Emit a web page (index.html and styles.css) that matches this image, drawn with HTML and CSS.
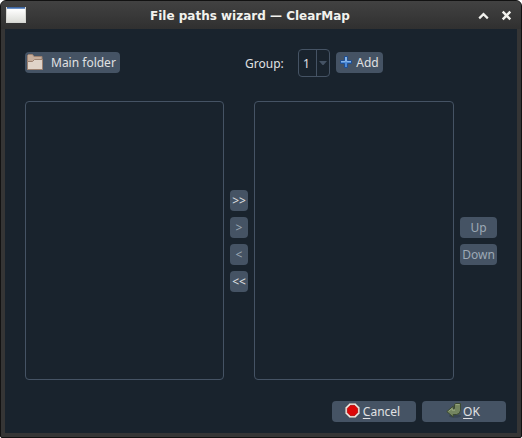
FILE: index.html
```html
<!DOCTYPE html>
<html lang="en">
<head>
<meta charset="utf-8">
<title>File paths wizard — ClearMap</title>
<link rel="stylesheet" href="styles.css">
</head>
<body>
<div class="window">
  <header class="titlebar">
    <span class="app-icon"></span>
    <h1>File paths wizard — ClearMap</h1>
    <svg class="controls" width="34" height="12" viewBox="0 0 34 12" fill="none" stroke="#f2f2ee">
      <path d="M1.2 8.4 5.5 4.1 9.8 8.4" stroke-width="2.2"/>
      <path d="M24.7 1.7 32.3 9.3M32.3 1.7 24.7 9.3" stroke-width="2.4"/>
    </svg>
  </header>
  <main class="dialog">
    <div class="toolbar">
      <button class="btn main-folder">
        <svg width="18" height="18" viewBox="0 0 18 18">
          <path d="M2.5 15V1.5L3.5 .5H7.5L9 2.5H17V15Z" fill="#c5ad9b" stroke="#9c8170"/>
          <path d="M2.5 15.5V7.5H7.5L9.5 5.5H17.5V15.5Z" fill="#dfd3c8" stroke="#9c8170"/>
        </svg><span>Main folder</span>
      </button>
      <label class="group-label">Group:</label>
      <div class="spin"><span class="value">1</span><span class="drop"><svg width="8" height="4" viewBox="0 0 8 4"><path d="M0 0H8L4.5 4H3.5Z" fill="#455364"/></svg></span></div>
      <button class="btn add">
        <svg width="12" height="12" viewBox="0 0 12 12"><path d="M4.5 .5H7.5V4.5H11.5V7.5H7.5V11.5H4.5V7.5H.5V4.5H4.5Z" fill="#4d8ad6" stroke="#204f91"/><path d="M1 5.5H5.5V1M6.5 1V5.5H11" fill="none" stroke="#86b5e9"/></svg><span>Add</span>
      </button>
    </div>
    <div class="lists">
      <div class="list"></div>
      <div class="stack move">
        <button class="btn">&gt;&gt;</button>
        <button class="btn off">&gt;</button>
        <button class="btn off">&lt;</button>
        <button class="btn">&lt;&lt;</button>
      </div>
      <div class="list right"></div>
      <div class="stack order">
        <button class="btn off">Up</button>
        <button class="btn off">Down</button>
      </div>
    </div>
    <footer class="actions">
      <button class="btn cancel">
        <svg width="15" height="15" viewBox="0 0 15 15"><path d="M4.6 .5H10.4L14.5 4.6V10.4L10.4 14.5H4.6L.5 10.4V4.6Z" fill="#f0eee9" stroke="#aaa69c" stroke-width=".7"/><path d="M5.4 2.3H9.6L12.7 5.4V9.6L9.6 12.7H5.4L2.3 9.6V5.4Z" fill="#dc0808" stroke="#a00000" stroke-width=".7"/></svg><span><u>C</u>ancel</span>
      </button>
      <button class="btn ok">
        <svg width="16" height="15" viewBox="0 0 16 15"><ellipse cx="9" cy="13" rx="6" ry="1.8" fill="#303c48" opacity=".6"/><path d="M8.5 1.5 9.5 .5H14.5V7.5Q14 11.3 10.5 11.5H7.2V14L.8 8.6 7.2 3.2V6H7.8Q8.5 5.8 8.5 5Z" fill="#748560" stroke="#3c4a32"/><path d="M9.8 1.6H13.6M2.6 8.3 6.2 5.3V7.2H9" fill="none" stroke="#9aab82"/></svg><span><u>O</u>K</span>
      </button>
    </footer>
  </main>
</div>
</body>
</html>
```
FILE: styles.css
```css
* { box-sizing: border-box; }
html { background: #fff; }
body { margin: 0; font: 12px/18px "Noto Sans", sans-serif; color: #e0e1e3; }
.window {
  width: 522px; height: 438px;
  padding: 0 4px 4px;
  border: 1px solid #121212;
  border-radius: 6px 6px 2px 2px;
  background: #353535;
}
.titlebar {
  display: flex; align-items: center;
  height: 28px; margin: 0 -4px; padding: 0 9px 0 5px;
  border-radius: 5px 5px 0 0;
  background: linear-gradient(#424242, #303030);
}
.app-icon {
  width: 20px; height: 16px;
  border: 1px solid #d5d6d2; border-top: 0;
  background: linear-gradient(#3f67a2 0 1px, #6d92c7 1px 2px, #fff 2px, #dcddd8);
}
h1 {
  flex: 1; margin: 0 0 0 124px; padding-top: 2px;
  font: bold 12px/26px "DejaVu Sans", sans-serif;
  color: #f2f2ee; white-space: nowrap;
}
.controls { margin-top: 2px; }
.dialog {
  display: flex; flex-direction: column;
  height: 404px; padding: 20px 11px 11px 20px;
  background: #19232d;
}
.toolbar { display: flex; align-items: center; height: 28px; }
.btn {
  display: flex; align-items: center; justify-content: center;
  height: 21px; padding: 0; border: 0; border-radius: 4px;
  background: #455364; color: #e0e1e3;
  font: inherit; white-space: nowrap;
}
.toolbar .btn { margin-bottom: 1px; }
.btn svg { flex: none; }
.btn.off { color: #9da9b5; }
.main-folder { width: 95px; justify-content: flex-start; }
.main-folder span { margin-left: 8px; }
.group-label { width: 53px; margin-left: 125px; padding-top: 1px; }
.spin {
  display: flex; width: 32px; height: 28px;
  border: 1px solid #455364; border-radius: 4px;
}
.value { width: 17px; line-height: 27px; padding-left: 4px; }
.drop {
  display: flex; flex: 1; align-items: center; justify-content: center;
  border-left: 1px solid #455364;
}
.add { width: 47px; margin-left: 6px; }
.add span { margin-left: 4px; }
.add svg { margin-top: -1px; }
.lists { display: flex; height: 279px; margin-top: 24px; }
.list { width: 199px; border: 1px solid #455364; border-radius: 4px; }
.list.right { width: 200px; }
.stack { display: flex; flex-direction: column; justify-content: center; gap: 6px; margin: 0 6px; }
.stack .btn { padding-top: 1px; }
.move { width: 18px; }
.order { width: 37px; }
.actions { display: flex; justify-content: flex-end; gap: 6px; margin-top: 21px; }
.actions .btn { width: 84px; }
.cancel svg { margin: -2px 3px 0 -3px; }
.ok svg { margin: -2px 1px 0 -2px; }
u { text-decoration: underline; text-decoration-thickness: 1px; text-underline-offset: 2px; }
```
